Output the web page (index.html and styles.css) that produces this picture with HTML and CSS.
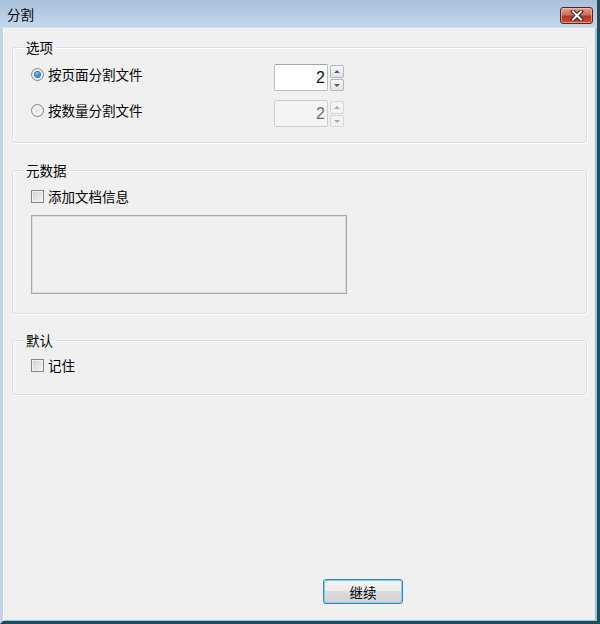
FILE: index.html
```html
<!DOCTYPE html>
<html lang="zh-CN">
<head>
<meta charset="utf-8">
<title>分割</title>
<link rel="stylesheet" href="styles.css">
</head>
<body>
<div class="window">
  <div class="titlebar">
    <span class="title">分割</span>
    <button class="close" aria-label="关闭">
      <svg width="14" height="11" viewBox="0 0 14 11">
        <path d="M3 1.5 L11 9.5 M11 1.5 L3 9.5" stroke="#3a2020" stroke-width="4" stroke-linecap="square" fill="none"/>
        <path d="M3 1.5 L11 9.5 M11 1.5 L3 9.5" stroke="#ffffff" stroke-width="2" stroke-linecap="square" fill="none"/>
      </svg>
    </button>
  </div>
  <div class="client">
    <fieldset class="group g-options">
      <legend>选项</legend>
      <div class="group-body opt-grid">
        <label class="choice"><span class="radio checked"></span>按页面分割文件</label>
        <div class="spinner">
          <div class="spin-input">2</div>
          <div class="spin-btns">
            <span class="spin-btn up"><i></i></span>
            <span class="spin-btn down"><i></i></span>
          </div>
        </div>
        <label class="choice"><span class="radio"></span>按数量分割文件</label>
        <div class="spinner disabled">
          <div class="spin-input">2</div>
          <div class="spin-btns">
            <span class="spin-btn up"><i></i></span>
            <span class="spin-btn down"><i></i></span>
          </div>
        </div>
      </div>
    </fieldset>

    <fieldset class="group g-meta">
      <legend>元数据</legend>
      <div class="group-body">
        <label class="choice"><span class="check"></span>添加文档信息</label>
        <div class="memo"></div>
      </div>
    </fieldset>

    <fieldset class="group g-default">
      <legend>默认</legend>
      <div class="group-body">
        <label class="choice"><span class="check"></span>记住</label>
      </div>
    </fieldset>

    <div class="footer">
      <button class="btn">继续</button>
    </div>
  </div>
</div>
</body>
</html>
```

FILE: styles.css
```css
* { box-sizing: border-box; }
html, body {
  margin: 0;
  padding: 0;
  width: 600px;
  height: 624px;
  overflow: hidden;
  background: #f0f0f0;
}
body {
  font-family: "Noto Sans CJK SC", "Noto Sans", sans-serif;
  font-size: 13.5px;
  color: #000;
}
.window {
  width: 600px;
  height: 624px;
  display: flex;
  flex-direction: column;
  border-left: 3px solid #c3d4e7;
  border-right: 3px solid #1f4e63;
  border-bottom: 3px solid #1f4e63;
  background: #f0f0f0;
}
.titlebar {
  height: 28px;
  flex: none;
  display: flex;
  justify-content: space-between;
  align-items: flex-start;
  padding: 0 4px 0 7px;
  margin-left: -3px;
  background: linear-gradient(#a9c1dc, #b9cee6 60%, #c4d7ec);
  border-bottom: 1px solid #d4e1ef;
}
.title {
  line-height: 28px;
  font-size: 13.5px;
  color: #000;
}
.close {
  margin-top: 7px;
  width: 33px;
  height: 17px;
  padding: 0;
  border: 1px solid #5a2424;
  border-radius: 3px;
  background: linear-gradient(#e3a193, #cf6e5b 45%, #b5351f 55%, #c4512f);
  box-shadow: inset 0 0 0 1px rgba(255,210,200,0.55);
  display: flex;
  align-items: center;
  justify-content: center;
}
.close svg { display: block; }
.client {
  flex: 1;
  display: flex;
  flex-direction: column;
  padding: 0 10px 0 9px;
  box-shadow: inset 1px 0 0 #fafcfe, inset -2px 0 0 #8fc8dd, inset 0 -1px 0 #8fc8dd;
}
.group {
  margin: 0;
  padding: 0;
  border: 1px solid #d5dfe5;
  border-radius: 3px;
  box-shadow: inset 1px 1px 0 #fff, 1px 1px 0 #fff;
  min-width: 0;
}
.group legend {
  margin-left: 10px;
  padding: 0 3px;
  line-height: 16px;
  height: 16px;
}
.group-body {
  padding-left: 18px;
}
.g-options {
  margin-top: 11px;
}
.g-options .group-body {
  padding-top: 9px;
  padding-bottom: 15px;
}
.g-meta {
  margin-top: 19px;
}
.g-meta .group-body {
  padding-top: 8px;
  padding-bottom: 19px;
}
.g-default {
  margin-top: 18px;
}
.g-default .group-body {
  padding-top: 7px;
  padding-bottom: 19px;
}
.opt-grid {
  display: grid;
  grid-template-columns: 243px auto;
  row-gap: 9px;
  align-items: start;
}
.choice {
  display: flex;
  align-items: center;
  height: 20px;
  line-height: 20px;
  white-space: nowrap;
}
.radio {
  width: 13px;
  height: 13px;
  border-radius: 50%;
  border: 1px solid #848585;
  background: radial-gradient(circle at 50% 50%, #e4e4e4 0, #f6f6f6 55%, #d2d2d2 100%);
  margin-right: 4px;
  display: flex;
  align-items: center;
  justify-content: center;
  flex: none;
}
.radio.checked::after {
  content: "";
  width: 5px;
  height: 5px;
  border-radius: 50%;
  background: radial-gradient(circle at 40% 35%, #8fd0ff 0, #2c82d6 55%, #1a4f8e 100%);
  box-shadow: 0 0 0 1px #3f6fa5;
}
.check {
  width: 13px;
  height: 13px;
  border: 1px solid #848585;
  background: linear-gradient(135deg, #cfcfcf, #f7f7f7);
  box-shadow: inset 0 0 0 1px #f2f2f2;
  margin-right: 4px;
  flex: none;
}
.spinner {
  display: flex;
  gap: 2px;
  height: 27px;
}
.spin-input {
  width: 54px;
  height: 27px;
  background: #fff;
  border: 1px solid #b9bcc2;
  border-top-color: #a3a6ad;
  border-radius: 2px;
  text-align: right;
  padding-right: 2px;
  font-family: "Liberation Sans", Arial, sans-serif;
  font-size: 16px;
  line-height: 25px;
  color: #111;
}
.spin-btns {
  display: flex;
  flex-direction: column;
  gap: 1px;
  padding-top: 1px;
}
.spin-btn {
  width: 14px;
  height: 13px;
  border: 1px solid #b3b6bb;
  border-radius: 2px;
  background: linear-gradient(#f6f6f6, #e4e4e4);
  display: flex;
  align-items: center;
  justify-content: center;
}
.spin-btn.down { height: 12px; }
.spin-btn i {
  width: 0;
  height: 0;
  border-left: 3px solid transparent;
  border-right: 3px solid transparent;
}
.spin-btn.up i { border-bottom: 3px solid #4a5f8a; }
.spin-btn.down i { border-top: 3px solid #4a5f8a; }
.spinner.disabled .spin-input {
  background: #f4f4f4;
  border-color: #cdcdcd;
  color: #6d6d6d;
}
.spinner.disabled .spin-btn {
  border-color: #d6d6d6;
  background: #f3f3f3;
}
.spinner.disabled .spin-btn.up i { border-bottom-color: #a8a8a8; }
.spinner.disabled .spin-btn.down i { border-top-color: #a8a8a8; }
.memo {
  margin-top: 9px;
  width: 316px;
  height: 79px;
  border: 1px solid #a7a7a7;
  box-shadow: inset 0 0 0 1px #dcdcdc;
  background: #f0f0f0;
}
.footer {
  margin-top: auto;
  display: flex;
  padding-left: 311px;
  padding-bottom: 17px;
}
.btn {
  width: 80px;
  height: 25px;
  padding: 0;
  font-family: "Noto Sans CJK SC", "Noto Sans", sans-serif;
  font-size: 13.5px;
  color: #000;
  border: 1px solid #3a83b3;
  border-radius: 3px;
  background: linear-gradient(#f3f3f3, #ececec 50%, #dcdcdc 50%, #d2d2d2);
  box-shadow: inset 0 0 0 1px #7fd3f0;
}
```
